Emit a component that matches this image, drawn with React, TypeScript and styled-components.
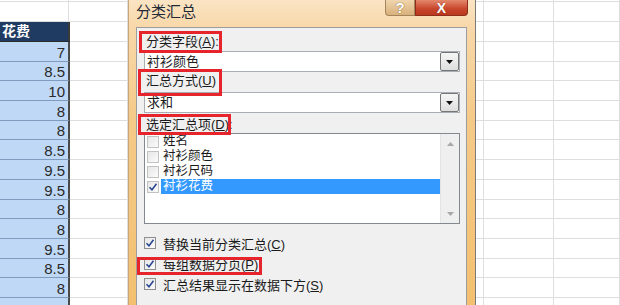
import styled, { createGlobalStyle } from "styled-components";

const GlobalStyle = createGlobalStyle`
  html, body {
    margin: 0;
    padding: 0;
    background: #fff;
  }
  body {
    font-family: "Liberation Sans", "Noto Sans CJK SC", sans-serif;
  }
`;

const Screen = styled.div`
  display: flex;
  width: 620px;
  height: 305px;
  overflow: hidden;
  background: #fff;
`;

/* ---------- spreadsheet ---------- */

const Sheet = styled.div<{ $width: number; $edge?: boolean }>`
  width: ${(p) => p.$width}px;
  flex: none;
  display: flex;
  flex-direction: column;
  margin-top: -18px;
  box-sizing: border-box;
  border-left: ${(p) => (p.$edge ? "1px solid #7a7a7a" : "none")};
`;

const SheetRow = styled.div<{ $h: number; $cols: string }>`
  display: grid;
  grid-template-columns: ${(p) => p.$cols};
  height: ${(p) => p.$h}px;
  flex: none;
`;

const GridCell = styled.div`
  box-sizing: border-box;
  border-bottom: 1px solid #dedede;
  border-right: 1px solid #dedede;
`;

const HeaderCell = styled.div`
  box-sizing: border-box;
  background: #1f3b62;
  color: #fff;
  font-weight: bold;
  font-size: 14px;
  line-height: 19px;
  padding-left: 2px;
  border-right: 2px solid #3a3a3a;
  border-bottom: 1px solid #2a2a2a;
  overflow: hidden;
`;

const ValueCell = styled.div`
  box-sizing: border-box;
  background: #bed8f6;
  color: #2a2a2a;
  font-size: 15px;
  padding-right: 3px;
  display: flex;
  align-items: flex-end;
  justify-content: flex-end;
  line-height: 17px;
  border-right: 2px solid #4a4a4a;
  border-bottom: 1px solid #7f9bbd;
`;

/* ---------- dialog ---------- */

const Dialog = styled.div`
  width: 347px;
  flex: none;
  display: flex;
  flex-direction: column;
  box-sizing: border-box;
  border-left: 1px solid #c9a679;
  background: linear-gradient(
    to bottom,
    #fbe4c4 0px,
    #f8d8a9 27px,
    #f5ca88 120px,
    #f3c070 305px
  );
`;

const TitleBar = styled.div`
  height: 27px;
  flex: none;
  display: flex;
  align-items: flex-start;
  padding: 0 7px 0 7px;
`;

const Title = styled.div`
  font-size: 15px;
  line-height: 16px;
  margin-top: 4px;
  color: #1f2a36;
`;

const CaptionButtons = styled.div`
  margin-left: auto;
  display: flex;
  height: 16px;
`;

const CaptionButton = styled.div<{ $kind: "help" | "close" }>`
  width: ${(p) => (p.$kind === "help" ? 30 : 53)}px;
  height: 16px;
  box-sizing: border-box;
  display: flex;
  align-items: center;
  justify-content: center;
  color: #fff;
  font-weight: bold;
  font-size: ${(p) => (p.$kind === "help" ? 15 : 14)}px;
  border: 1px solid ${(p) => (p.$kind === "help" ? "#a3845c" : "#8e2d1b")};
  border-top: none;
  border-radius: ${(p) => (p.$kind === "help" ? "0 0 0 4px" : "0 0 4px 0")};
  background: ${(p) =>
    p.$kind === "help"
      ? "linear-gradient(to bottom, #efd5ad, #d9b07a)"
      : "linear-gradient(to bottom, #e4886c, #c7452a 60%, #b9391f)"};
  text-shadow: ${(p) =>
    p.$kind === "help"
      ? "0 0 1px #8c6a3c, 0 0 1px #8c6a3c"
      : "0 0 1px #7a2414"};
`;

const Panel = styled.div`
  flex: 1;
  margin: 0 8px 0 7px;
  background: #f0f0f0;
  border: 1px solid #9d9d9d;
  border-bottom: none;
  padding: 0 6px 0 7px;
  display: flex;
  flex-direction: column;
  font-size: 13px;
  color: #1b1b1b;
`;

const FieldLabel = styled.div<{ $gap: number }>`
  margin-top: ${(p) => p.$gap}px;
  height: 16px;
  line-height: 16px;
  display: flex;
  align-self: flex-start;
`;

const Marked = styled.span`
  position: relative;
  padding-left: 2px;
`;

const RedMark = styled.span<{ $t: number; $r: number; $b: number; $l: number }>`
  position: absolute;
  top: ${(p) => p.$t}px;
  right: ${(p) => p.$r}px;
  bottom: ${(p) => p.$b}px;
  left: ${(p) => p.$l}px;
  border: 3px solid #e5242b;
  pointer-events: none;
`;

const Combo = styled.div<{ $gap: number }>`
  margin-top: ${(p) => p.$gap}px;
  height: 21px;
  flex: none;
  box-sizing: border-box;
  display: flex;
  background: #fff;
  border: 1px solid #a9adb4;
`;

const ComboText = styled.div`
  flex: 1;
  padding-left: 2px;
  line-height: 19px;
`;

const ComboArrow = styled.div`
  width: 19px;
  box-sizing: border-box;
  display: flex;
  align-items: center;
  justify-content: center;
  border: 1px solid #767676;
  border-radius: 2px;
  background: linear-gradient(to bottom, #f6f6f6, #dedede);
`;

const ListBox = styled.div`
  height: 91px;
  flex: none;
  box-sizing: border-box;
  display: flex;
  background: #fff;
  border: 1px solid #84888f;
`;

const ListItems = styled.div`
  flex: 1;
  display: flex;
  flex-direction: column;
`;

const ListItem = styled.div`
  height: 15px;
  display: flex;
  align-items: center;
  padding-left: 2px;
`;

const ItemText = styled.div<{ $selected?: boolean }>`
  flex: 1;
  margin-left: 2px;
  padding-left: 2px;
  height: 15px;
  font-size: 12.5px;
  line-height: 15px;
  overflow: hidden;
  background: ${(p) => (p.$selected ? "#3399ff" : "transparent")};
  color: ${(p) => (p.$selected ? "#fff" : "#1b1b1b")};
`;

const ScrollBar = styled.div`
  width: 19px;
  display: flex;
  flex-direction: column;
  align-items: center;
  justify-content: space-between;
  padding: 8px 0 7px;
  box-sizing: border-box;
  background: #efefef;
  border-left: 1px solid #e4e4e4;
`;

const Box = styled.div<{ $faded?: boolean }>`
  width: 12px;
  height: 12px;
  flex: none;
  box-sizing: border-box;
  border: 1px solid ${(p) => (p.$faded ? "#c2c2c2" : "#8e8f8f")};
  background: linear-gradient(135deg, #e6e6e6, #fbfbfb);
  display: flex;
  align-items: center;
  justify-content: center;
`;

const Options = styled.div`
  margin-top: 9px;
  display: flex;
  flex-direction: column;
`;

const CheckRow = styled.div`
  position: relative;
  align-self: flex-start;
  height: 20.5px;
  display: flex;
  align-items: center;
  gap: 7px;
`;

const Tick = () => (
  <svg width="10" height="10" viewBox="0 0 10 10">
    <path d="M1.5 5.2 L4 7.8 L8.5 1.8" fill="none" stroke="#27448f" strokeWidth="1.5" />
  </svg>
);

const Triangle = ({ up, color }: { up?: boolean; color: string }) => (
  <svg width="7" height="4" viewBox="0 0 7 4">
    <path d={up ? "M0 4 L3.5 0 L7 4 Z" : "M0 0 L7 0 L3.5 4 Z"} fill={color} />
  </svg>
);

const values = ["7", "8.5", "10", "8", "8", "8.5", "9.5", "9.5", "8", "8", "9.5", "8.5", "8", ""];
const fields = ["姓名", "衬衫颜色", "衬衫尺码", "衬衫花费"];
const ROW = 19.7;

export default function App() {
  return (
    <>
      <GlobalStyle />
      <Screen>
        <Sheet $width={128}>
          <SheetRow $h={20} $cols="69px 59px">
            <GridCell />
            <GridCell />
          </SheetRow>
          <SheetRow $h={20} $cols="69px 59px">
            <GridCell />
            <GridCell />
          </SheetRow>
          <SheetRow $h={20} $cols="70px 58px">
            <HeaderCell>花费</HeaderCell>
            <GridCell />
          </SheetRow>
          {values.map((v, i) => (
            <SheetRow key={i} $h={ROW} $cols="70px 58px">
              <ValueCell>{v}</ValueCell>
              <GridCell />
            </SheetRow>
          ))}
        </Sheet>

        <Dialog>
          <TitleBar>
            <Title>分类汇总</Title>
            <CaptionButtons>
              <CaptionButton $kind="help">?</CaptionButton>
              <CaptionButton $kind="close">X</CaptionButton>
            </CaptionButtons>
          </TitleBar>
          <Panel>
            <FieldLabel $gap={6}>
              <Marked>
                分类字段(<u>A</u>):
                <RedMark $t={-3} $r={-3} $b={-3} $l={-5} />
              </Marked>
            </FieldLabel>
            <Combo $gap={1}>
              <ComboText>衬衫颜色</ComboText>
              <ComboArrow>
                <Triangle color="#111" />
              </ComboArrow>
            </Combo>
            <FieldLabel $gap={1}>
              <Marked>
                汇总方式(<u>U</u>)
                <RedMark $t={-4} $r={-6} $b={-7} $l={-6} />
              </Marked>
            </FieldLabel>
            <Combo $gap={3}>
              <ComboText>求和</ComboText>
              <ComboArrow>
                <Triangle color="#111" />
              </ComboArrow>
            </Combo>
            <FieldLabel $gap={4}>
              <Marked>
                选定汇总项(<u>D</u>)
                <RedMark $t={-3} $r={-2} $b={-2} $l={-6} />
              </Marked>
              :
            </FieldLabel>
            <ListBox>
              <ListItems>
                {fields.map((f, i) => {
                  const selected = i === fields.length - 1;
                  return (
                    <ListItem key={f}>
                      <Box $faded>{selected && <Tick />}</Box>
                      <ItemText $selected={selected}>{f}</ItemText>
                    </ListItem>
                  );
                })}
              </ListItems>
              <ScrollBar>
                <Triangle up color="#a8a8a8" />
                <Triangle color="#a8a8a8" />
              </ScrollBar>
            </ListBox>
            <Options>
              <CheckRow>
                <Box>
                  <Tick />
                </Box>
                <span>
                  替换当前分类汇总(<u>C</u>)
                </span>
              </CheckRow>
              <CheckRow>
                <Box>
                  <Tick />
                </Box>
                <span>
                  每组数据分页(<u>P</u>)
                </span>
                <RedMark $t={3} $r={-4} $b={-1} $l={-7} />
              </CheckRow>
              <CheckRow>
                <Box>
                  <Tick />
                </Box>
                <span>
                  汇总结果显示在数据下方(<u>S</u>)
                </span>
              </CheckRow>
            </Options>
          </Panel>
        </Dialog>

        <Sheet $width={145} $edge>
          {[20, 20, 20, ...values.map(() => ROW)].map((h, i) => (
            <SheetRow key={i} $h={h} $cols="8px 70px 1fr">
              <GridCell />
              <GridCell />
              <GridCell />
            </SheetRow>
          ))}
        </Sheet>
      </Screen>
    </>
  );
}
